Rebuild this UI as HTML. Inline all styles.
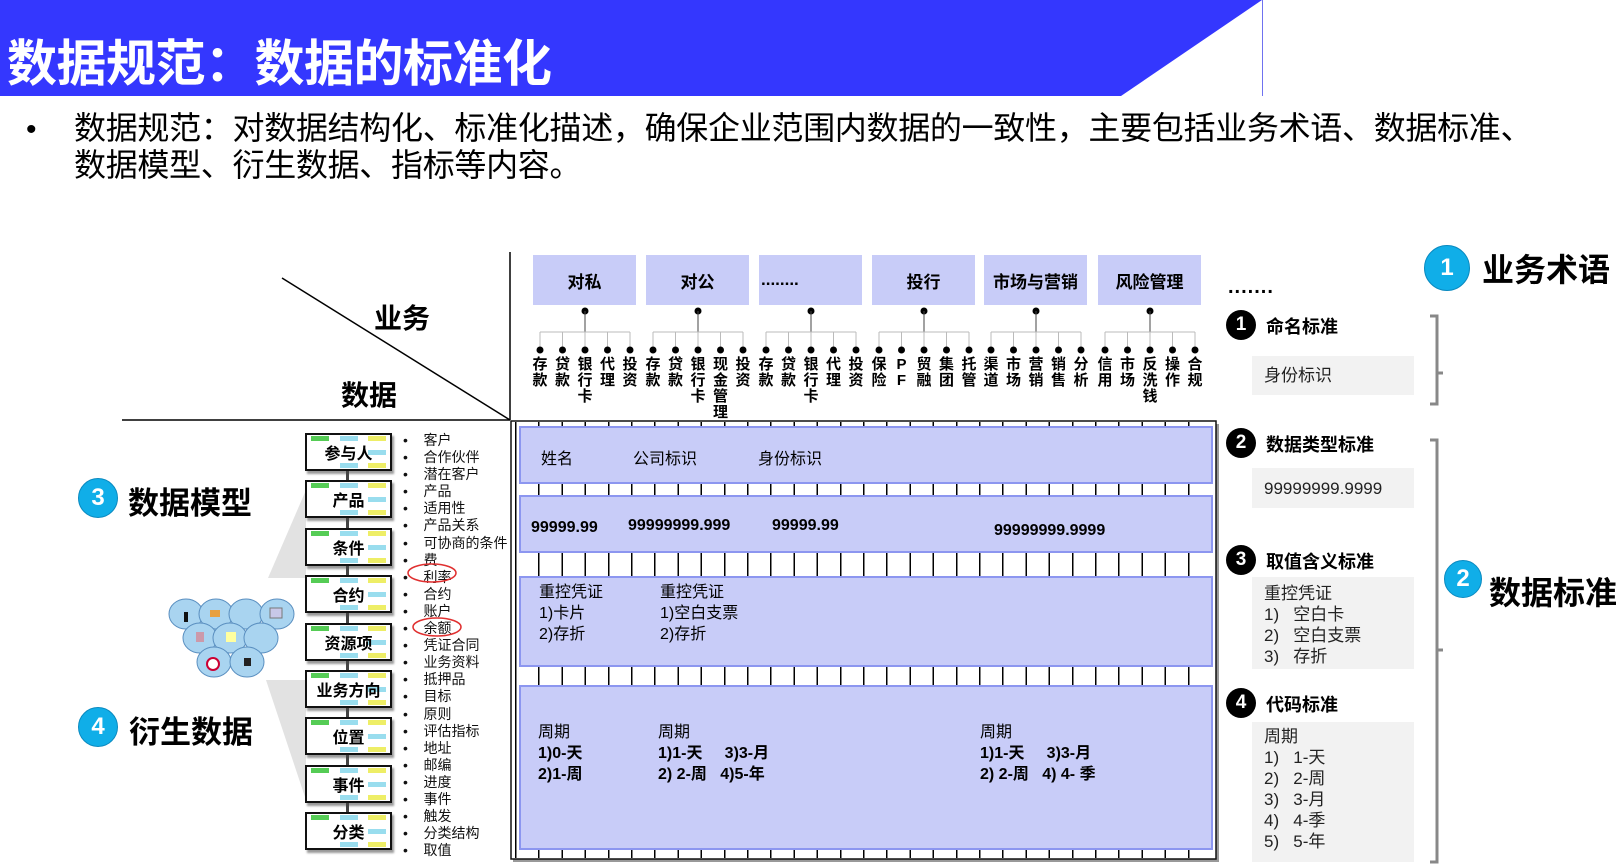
<!DOCTYPE html>
<html><head><meta charset="utf-8">
<style>
*{margin:0;padding:0;box-sizing:border-box}
body{width:1620px;height:864px;position:relative;overflow:hidden;background:#fff;font-family:"Liberation Sans","Noto Sans CJK SC",sans-serif;color:#000}
.a{position:absolute;white-space:nowrap}
.b{font-weight:bold}
.cat{position:absolute;top:255px;height:50px;width:103px;background:#c8ccf8;font-size:17px;font-weight:bold;display:flex;align-items:center;justify-content:center}
.vl{position:absolute;top:357px;width:16px;font-size:15px;font-weight:bold;line-height:16px;text-align:center;white-space:normal}
.row{position:absolute;left:519px;width:694px;background:#c8ccf8;border:2px solid #8c96f0}
.mb{position:absolute;left:305px;width:87px;height:38px;border:2px solid #111;background:#fff;box-shadow:2px 3px 2px #999;font-size:16px;font-weight:bold;display:flex;align-items:center;justify-content:center}
.mb i{position:absolute;width:18px;height:5px}
.mt{position:absolute;left:403px;font-size:14px;line-height:17.1px;color:#111}
.num{position:absolute;width:30px;height:30px;border-radius:50%;background:#000;color:#fff;font-weight:bold;font-size:19px;display:flex;align-items:center;justify-content:center}
.gb{position:absolute;left:1252px;width:162px;background:#f2f2f2;font-size:17px;color:#222;padding-left:12px;line-height:21px}
.bc{position:absolute;width:42px;height:42px;border-radius:50%;background:#10aee8;color:#fff;font-weight:bold;font-size:24px;display:flex;align-items:center;justify-content:center;border:1px solid #0a8ac0}
</style></head><body>
<svg class="a" style="left:0;top:0" width="1620" height="864">
<polygon points="0,0 1262,0 1121,96 0,96" fill="#3437fe"/>
<line x1="1262.5" y1="0" x2="1262.5" y2="96" stroke="#6f72f0" stroke-width="1"/>
<line x1="122" y1="420" x2="510" y2="420" stroke="#000" stroke-width="1.5"/>
<line x1="510" y1="252" x2="510" y2="420" stroke="#000" stroke-width="1.5"/>
<line x1="282" y1="278" x2="510" y2="420" stroke="#000" stroke-width="1.5"/>
<polygon points="268,578 306,490 306,578" fill="#e2e2e2"/>
<polygon points="266,680 306,680 306,800" fill="#e2e2e2"/>
<g fill="#a9d4f0" stroke="#5a8fc0" stroke-width="1">
<ellipse cx="186" cy="614" rx="17" ry="15"/><ellipse cx="216" cy="614" rx="17" ry="15"/><ellipse cx="246" cy="614" rx="17" ry="15"/><ellipse cx="277" cy="614" rx="17" ry="15"/>
<ellipse cx="200" cy="638" rx="17" ry="15"/><ellipse cx="230" cy="638" rx="17" ry="15"/><ellipse cx="261" cy="638" rx="17" ry="15"/>
<ellipse cx="214" cy="662" rx="17" ry="15"/><ellipse cx="247" cy="662" rx="17" ry="15"/>
</g>
<rect x="184" y="612" width="4" height="10" fill="#111"/><rect x="210" y="610" width="10" height="7" fill="#e8a040"/><rect x="270" y="608" width="12" height="10" fill="#c8c8e8" stroke="#777"/>
<rect x="196" y="632" width="8" height="10" fill="#c9a"/><rect x="226" y="632" width="10" height="10" fill="#ffffa0"/><circle cx="213" cy="664" r="6" fill="#fff" stroke="#c03" stroke-width="2"/><rect x="244" y="658" width="7" height="8" fill="#222"/>
<rect x="513" y="424" width="706" height="438" fill="#999"/>
<rect x="511" y="421" width="705" height="438" fill="#fff" stroke="#111" stroke-width="1.5"/>
</svg>
<div class="a" style="left:515px;top:422px;width:696px;height:436px;background:repeating-linear-gradient(90deg,#000 0 1.5px,transparent 1.5px 23.2px)"></div>

<div class="a b" style="left:7px;top:24px;font-size:50px;color:#fff;letter-spacing:-0.5px">数据规范：数据的标准化</div>
<div class="a" style="left:26px;top:113px;font-size:30px">•</div>
<div class="a" style="left:74px;top:110px;font-size:32px;line-height:37px;letter-spacing:-0.3px">数据规范：对数据结构化、标准化描述，确保企业范围内数据的一致性，主要包括业务术语、数据标准、<br>数据模型、衍生数据、指标等内容。</div>

<div class="a b" style="left:374px;top:297px;font-size:28px">业务</div>
<div class="a b" style="left:341px;top:374px;font-size:28px">数据</div>

<div class="cat" style="left:533px">对私</div>
<div class="cat" style="left:646px">对公</div>
<div class="cat" style="left:759px;justify-content:flex-start;padding-left:2px">........</div>
<div class="cat" style="left:872px">投行</div>
<div class="cat" style="left:984px">市场与营销</div>
<div class="cat" style="left:1098px">风险管理</div>

<svg class="a" style="left:0;top:0" width="1620" height="864" id="tree"></svg>

<div class="row" style="top:426px;height:58px"></div>
<div class="row" style="top:495px;height:58px"></div>
<div class="row" style="top:576px;height:91px"></div>
<div class="row" style="top:685px;height:165px"></div>
<div class="a" style="left:541px;top:445px;font-size:16px">姓名</div>
<div class="a" style="left:633px;top:445px;font-size:16px">公司标识</div>
<div class="a" style="left:758px;top:445px;font-size:16px">身份标识</div>
<div class="a b" style="left:531px;top:519px;font-size:16px">99999.99</div>
<div class="a b" style="left:628px;top:517px;font-size:16px">99999999.999</div>
<div class="a b" style="left:772px;top:517px;font-size:16px">99999.99</div>
<div class="a b" style="left:994px;top:522px;font-size:16px">99999999.9999</div>
<div class="a" style="left:539px;top:582px;font-size:16px;line-height:21px">重控凭证<br>1)卡片<br>2)存折</div>
<div class="a" style="left:660px;top:582px;font-size:16px;line-height:21px">重控凭证<br>1)空白支票<br>2)存折</div>
<div class="a" style="left:538px;top:722px;font-size:16px;line-height:21px">周期<br><b>1)0-天<br>2)1-周</b></div>
<div class="a" style="left:658px;top:722px;font-size:16px;line-height:21px">周期<br><b>1)1-天 &nbsp; &nbsp; 3)3-月<br>2) 2-周 &nbsp; 4)5-年</b></div>
<div class="a" style="left:980px;top:722px;font-size:16px;line-height:21px">周期<br><b>1)1-天 &nbsp; &nbsp; 3)3-月<br>2) 2-周 &nbsp; 4) 4- 季</b></div>

<div id="mbs"></div>
<div class="mt" style="top:432px">
•&nbsp;&nbsp;&nbsp;&nbsp;客户<br>•&nbsp;&nbsp;&nbsp;&nbsp;合作伙伴<br>•&nbsp;&nbsp;&nbsp;&nbsp;潜在客户<br>•&nbsp;&nbsp;&nbsp;&nbsp;产品<br>•&nbsp;&nbsp;&nbsp;&nbsp;适用性<br>•&nbsp;&nbsp;&nbsp;&nbsp;产品关系<br>•&nbsp;&nbsp;&nbsp;&nbsp;可协商的条件<br>•&nbsp;&nbsp;&nbsp;&nbsp;费<br>•&nbsp;&nbsp;&nbsp;&nbsp;利率<br>•&nbsp;&nbsp;&nbsp;&nbsp;合约<br>•&nbsp;&nbsp;&nbsp;&nbsp;账户<br>•&nbsp;&nbsp;&nbsp;&nbsp;余额<br>•&nbsp;&nbsp;&nbsp;&nbsp;凭证合同<br>•&nbsp;&nbsp;&nbsp;&nbsp;业务资料<br>•&nbsp;&nbsp;&nbsp;&nbsp;抵押品<br>•&nbsp;&nbsp;&nbsp;&nbsp;目标<br>•&nbsp;&nbsp;&nbsp;&nbsp;原则<br>•&nbsp;&nbsp;&nbsp;&nbsp;评估指标<br>•&nbsp;&nbsp;&nbsp;&nbsp;地址<br>•&nbsp;&nbsp;&nbsp;&nbsp;邮编<br>•&nbsp;&nbsp;&nbsp;&nbsp;进度<br>•&nbsp;&nbsp;&nbsp;&nbsp;事件<br>•&nbsp;&nbsp;&nbsp;&nbsp;触发<br>•&nbsp;&nbsp;&nbsp;&nbsp;分类结构<br>•&nbsp;&nbsp;&nbsp;&nbsp;取值</div>
<svg class="a" style="left:0;top:0" width="600" height="864"><ellipse cx="432" cy="573" rx="24" ry="9" fill="none" stroke="#e03030" stroke-width="1.5"/><ellipse cx="437" cy="627" rx="24" ry="9" fill="none" stroke="#e03030" stroke-width="1.5"/></svg>

<div class="bc" style="left:78px;top:478px;width:40px;height:40px">3</div>
<div class="a b" style="left:128px;top:478px;font-size:31px">数据模型</div>
<div class="bc" style="left:78px;top:707px;width:40px;height:40px">4</div>
<div class="a b" style="left:129px;top:707px;font-size:31px">衍生数据</div>

<div class="bc" style="left:1424px;top:245px;width:46px;height:46px">1</div>
<div class="a b" style="left:1482px;top:245px;font-size:32px">业务术语</div>
<div class="a b" style="left:1228px;top:276px;font-size:20px;letter-spacing:1px">.......</div>
<div class="num" style="left:1226px;top:310px">1</div><div class="a b" style="left:1266px;top:313px;font-size:18px">命名标准</div>
<div class="gb" style="left:1252px;top:356px;height:39px;padding-top:9px">身份标识</div>
<div class="num" style="left:1226px;top:428px">2</div><div class="a b" style="left:1266px;top:431px;font-size:18px">数据类型标准</div>
<div class="gb" style="left:1252px;top:468px;height:40px;padding-top:10px">99999999.9999</div>
<div class="num" style="left:1226px;top:545px">3</div><div class="a b" style="left:1266px;top:548px;font-size:18px">取值含义标准</div>
<div class="gb" style="left:1252px;top:577px;height:92px;padding-top:6px">重控凭证<br>1)&nbsp;&nbsp; 空白卡<br>2)&nbsp;&nbsp; 空白支票<br>3)&nbsp;&nbsp; 存折</div>
<div class="num" style="left:1226px;top:688px">4</div><div class="a b" style="left:1266px;top:691px;font-size:18px">代码标准</div>
<div class="gb" style="left:1252px;top:722px;height:140px;padding-top:4px">周期<br>1)&nbsp;&nbsp; 1-天<br>2)&nbsp;&nbsp; 2-周<br>3)&nbsp;&nbsp; 3-月<br>4)&nbsp;&nbsp; 4-季<br>5)&nbsp;&nbsp; 5-年</div>
<svg class="a" style="left:0;top:0" width="1620" height="864">
<path d="M1430,316 H1437 V373 H1443 M1437,373 V404 H1430" fill="none" stroke="#888" stroke-width="3"/>
<path d="M1430,440 H1437 V650 H1443 M1437,650 V862 H1430" fill="none" stroke="#888" stroke-width="3"/>
</svg>
<div class="bc" style="left:1444px;top:560px;width:38px;height:38px">2</div>
<div class="a b" style="left:1489px;top:568px;font-size:32px">数据标准</div>

<script>
var cats=[[533,["存款","贷款","银行卡","代理","投资"]],[646,["存款","贷款","银行卡","现金管理","投资"]],[759,["存款","贷款","银行卡","代理","投资"]],[872,["保险","PF","贸融","集团","托管"]],[984,["渠道","市场","营销","销售","分析"]],[1098,["信用","市场","反洗钱","操作","合规"]]];
var s='';var h='';
cats.forEach(function(c){var cx=c[0]+52;var x0=c[0]+7;
s+='<circle cx="'+cx+'" cy="311" r="3.5"/><line x1="'+cx+'" y1="311" x2="'+cx+'" y2="332" stroke="#444"/>';
s+='<line x1="'+x0+'" y1="332" x2="'+(x0+90)+'" y2="332" stroke="#bbb"/>';
c[1].forEach(function(t,i){var x=x0+i*22.5;s+='<line x1="'+x+'" y1="332" x2="'+x+'" y2="350" stroke="#bbb"/><circle cx="'+x+'" cy="350" r="3.5"/>';
h+='<div class="vl" style="left:'+(x-8)+'px">'+t.split('').join('<br>')+'</div>';});});
document.getElementById('tree').innerHTML=s;
document.body.insertAdjacentHTML('beforeend',h);
var n=["参与人","产品","条件","合约","资源项","业务方向","位置","事件","分类"],m='';
n.forEach(function(t,i){var y=433+i*47.4;
m+='<div class="mb" style="top:'+y+'px"><i style="left:4px;top:1px;background:#5c5"></i><i style="left:33px;top:1px;background:#9de"></i><i style="right:4px;top:1px;background:#ee6"></i><i style="right:4px;top:15px;background:#9de"></i><i style="left:33px;bottom:1px;background:#9de"></i><i style="right:4px;bottom:1px;background:#ee6"></i><span style="position:relative">'+t+'</span></div>';
if(i<8)m+='<div class="a" style="left:346px;top:'+(y+38)+'px;width:3px;height:10px;background:#444"></div>';});
document.getElementById('mbs').innerHTML=m;
</script>
</body></html>
